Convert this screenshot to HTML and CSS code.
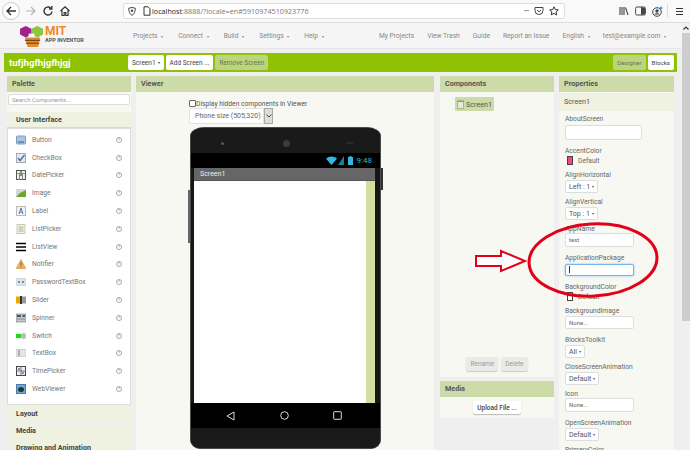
FILE: index.html
```html
<!DOCTYPE html>
<html lang="en">
<head>
    <meta charset="UTF-8">
    <title>MIT App Inventor</title>
    <link rel="stylesheet" href="styles.css">
</head>
<body>

    <div class="browser-bar">
        <span class="back-btn">
            <svg width="12" height="12" viewBox="0 0 12 12"><path d="M11 6H2M6 2L2 6l4 4" fill="none" stroke="#333" stroke-width="1.4"/></svg>
        </span>
        <svg class="tool-icon" width="12" height="12" viewBox="0 0 12 12"><path d="M1 6h9M6 2l4 4-4 4" fill="none" stroke="#b5b5b5" stroke-width="1.2"/></svg>
        <svg class="tool-icon" width="12" height="12" viewBox="0 0 12 12"><path d="M10 6.5A4 4 0 1 1 8.6 3M9.8 1v3H7" fill="none" stroke="#333" stroke-width="1.4"/></svg>
        <svg class="tool-icon" width="12" height="12" viewBox="0 0 12 12"><path d="M1.5 6L6 1.8 10.5 6M3 5.5V10.5h2.2V7.5h1.6v3H9V5.5" fill="none" stroke="#333" stroke-width="1.2"/></svg>
        <div class="url-bar">
            <svg width="8" height="9" viewBox="0 0 8 9"><path d="M.7 1.2L4 .5l3.300.7c0 3.500-1 5.800-3.300 7.200C1.700 7 .7 4.700.7 1.200z" fill="none" stroke="#444" stroke-width="1"/><circle cx="4" cy="3.8" r="1.2" fill="#444"/></svg>
            <svg width="8" height="10" viewBox="0 0 8 10"><path d="M1 .8h4l2 2v6.400H1z" fill="none" stroke="#333" stroke-width="1"/></svg>
            <span class="url-text"><b>localhost</b>:8888/?locale=en#5910974510923776</span>
            <span class="url-end">
                <span class="url-dots">&bull;&bull;&bull;</span>
                <svg width="10" height="10" viewBox="0 0 10 10"><path d="M1 1.5h8v3a4 4 0 0 1-8 0zM3 4l2 1.800L7 4" fill="none" stroke="#444" stroke-width="1"/></svg>
                <svg width="10" height="10" viewBox="0 0 10 10"><path d="M5 .8l1.300 2.700 3 .4-2.200 2 .6 3L5 7.400 2.300 8.900l.6-3-2.200-2 3-.4z" fill="none" stroke="#333" stroke-width="1"/></svg>
            </span>
        </div>
        <div class="browser-right">
            <svg width="10" height="10" viewBox="0 0 10 10"><path d="M1 1v8M3 1v8M5 1v8M6.5 1.5L9 9" fill="none" stroke="#444" stroke-width="1.1"/></svg>
            <svg width="11" height="10" viewBox="0 0 11 10"><rect x=".6" y="1" width="9.8" height="8" rx="1.5" fill="none" stroke="#444"/><path d="M6.500 1v8" stroke="#444"/><rect x="7" y="1.5" width="3" height="7" fill="#444"/></svg>
            <svg width="11" height="11" viewBox="0 0 11 11"><circle cx="5" cy="6" r="4.3" fill="none" stroke="#444"/><circle cx="5" cy="5" r="1.7" fill="#444"/><path d="M2.200 8.500C3 6.800 7 6.800 7.800 8.500" fill="#444"/><circle cx="9" cy="2" r="1.5" fill="#3aa6ef"/></svg>
            <span class="browser-sep"></span>
            <svg width="9" height="9" viewBox="0 0 9 9"><path d="M1 1.5h7M1 4.5h7M1 7.5h7" stroke="#333" stroke-width="1.2"/></svg>
        </div>
    </div>

    <div class="page">
        <div class="app">
            <div class="menu-bar">
                <div class="logo">
                    <svg width="25" height="24" viewBox="0 0 26 25">
                        <path d="M6 2l6 3v6l-6 3-6-3V5z" fill="#a3218e"/>
                        <path d="M18 2l6 3v6l-6 3-6-3V5z" fill="#8dc63f"/>
                        <rect x="9" y="10" width="6" height="4" fill="#fff"/>
                        <path d="M5 14h16l-2 10H8z" fill="#e58a2b"/>
                        <path d="M5 17h16M6 20h14" stroke="#5d3a17" stroke-width="1"/>
                    </svg>
                    <div class="logo-text">
                        <span class="logo-mit">MIT</span>
                        <span class="logo-sub">APP INVENTOR</span>
                    </div>
                </div>
                <div class="menu-left">
                    <span>Projects <i>&#9662;</i></span>
                    <span>Connect <i>&#9662;</i></span>
                    <span>Build <i>&#9662;</i></span>
                    <span>Settings <i>&#9662;</i></span>
                    <span>Help <i>&#9662;</i></span>
                </div>
                <div class="menu-right">
                    <span>My Projects</span>
                    <span>View Trash</span>
                    <span>Guide</span>
                    <span>Report an Issue</span>
                    <span>English <i>&#9662;</i></span>
                    <span>test@example.com <i>&#9662;</i></span>
                </div>
            </div>

            <div class="project-bar">
                <span class="project-name">tufjhgfhjgfhjgj</span>
                <div class="project-btns">
                    <span class="btn">Screen1 <i>&#9662;</i></span>
                    <span class="btn">Add Screen ...</span>
                    <span class="btn off">Remove Screen</span>
                </div>
                <div class="view-btns">
                    <span class="btn off">Designer</span>
                    <span class="btn">Blocks</span>
                </div>
            </div>

            <div class="columns">
                <div class="palette">
                    <div class="panel-head">Palette</div>
                    <div class="search-wrap"><div class="search-box">Search Components...</div></div>
                    <div class="drawer-head first">User Interface</div>
                    <div class="palette-list">
                        <div class="palette-row">
                            <svg width="10" height="10" viewBox="0 0 10 10"><rect x=".5" y="1" width="9" height="8" rx="1" fill="#a9c6e4" stroke="#7c9cbd"/><rect x="2" y="6" width="6" height="2" fill="#6d8fb4"/></svg>
                            <span>Button</span><em>?</em>
                        </div>
                        <div class="palette-row">
                            <svg width="10" height="10" viewBox="0 0 10 10"><rect x=".5" y=".5" width="9" height="9" fill="#e8e8e8" stroke="#aaa"/><path d="M2 5l2 2.500L8.500 2" fill="none" stroke="#3d78bd" stroke-width="1.5"/></svg>
                            <span>CheckBox</span><em>?</em>
                        </div>
                        <div class="palette-row">
                            <svg width="10" height="10" viewBox="0 0 10 10"><rect x=".5" y=".5" width="9" height="9" fill="#eee" stroke="#555"/><path d="M.5 3.500h9M3.500 3.500v6M6.500 3.500v6" stroke="#888"/><rect x="4" y="1" width="2" height="5" fill="#7d9a5a"/></svg>
                            <span>DatePicker</span><em>?</em>
                        </div>
                        <div class="palette-row">
                            <svg width="10" height="10" viewBox="0 0 10 10"><rect y="1" width="10" height="8" fill="#cfd8dc"/><path d="M0 9l4-4 6-3v7z" fill="#6ea52a"/></svg>
                            <span>Image</span><em>?</em>
                        </div>
                        <div class="palette-row">
                            <svg width="10" height="10" viewBox="0 0 10 10"><rect x=".5" y=".5" width="9" height="9" fill="#f2f2f2" stroke="#bbb"/><path d="M3 8l2-6 2 6M3.800 6h2.400" fill="none" stroke="#4a7ab5" stroke-width="1"/></svg>
                            <span>Label</span><em>?</em>
                        </div>
                        <div class="palette-row">
                            <svg width="10" height="10" viewBox="0 0 10 10"><rect x="1" y=".5" width="8" height="9" fill="#f2f4ea" stroke="#c5c9bb"/><path d="M2.500 3h5M2.500 5h5M2.500 7h5" stroke="#a4b96f"/></svg>
                            <span>ListPicker</span><em>?</em>
                        </div>
                        <div class="palette-row">
                            <svg width="10" height="10" viewBox="0 0 10 10"><path d="M0 1.500h10M0 5h10M0 8.500h10" stroke="#000" stroke-width="1.6"/></svg>
                            <span>ListView</span><em>?</em>
                        </div>
                        <div class="palette-row">
                            <svg width="10" height="10" viewBox="0 0 10 10"><path d="M5 .5L9.800 9.500H.2z" fill="#f0b45a" stroke="#d9822b" stroke-width=".6"/><path d="M5 3.500v3M5 7.500v1" stroke="#555"/></svg>
                            <span>Notifier</span><em>?</em>
                        </div>
                        <div class="palette-row">
                            <svg width="10" height="10" viewBox="0 0 10 10"><rect y="1.5" width="10" height="7" fill="#dde3ea" stroke="#bbb" stroke-width=".5"/><circle cx="3" cy="5" r="1" fill="#4a7ab5"/><circle cx="7" cy="5" r="1" fill="#4a7ab5"/></svg>
                            <span>PasswordTextBox</span><em>?</em>
                        </div>
                        <div class="palette-row">
                            <svg width="10" height="10" viewBox="0 0 10 10"><rect y="1.5" width="4" height="7" fill="#f0a800"/><rect x="4" y="1" width="2" height="8" fill="#333"/><rect x="6" y="1.5" width="4" height="7" fill="#999"/></svg>
                            <span>Slider</span><em>?</em>
                        </div>
                        <div class="palette-row">
                            <svg width="10" height="10" viewBox="0 0 10 10"><rect y="1" width="10" height="8" fill="#c3c8cc" stroke="#777" stroke-width=".6"/><rect x="1" y="2" width="4" height="2" fill="#3c5a76"/><rect x="6.5" y="2" width="2.5" height="2" fill="#3c5a76"/><path d="M1 6h8" stroke="#888"/></svg>
                            <span>Spinner</span><em>?</em>
                        </div>
                        <div class="palette-row">
                            <svg width="10" height="10" viewBox="0 0 10 10"><rect y="3" width="6" height="4" fill="#18e018"/><rect x="5" y="2" width="5" height="6" rx="2.5" fill="#bbb"/></svg>
                            <span>Switch</span><em>?</em>
                        </div>
                        <div class="palette-row">
                            <svg width="10" height="10" viewBox="0 0 10 10"><rect y="1.5" width="10" height="7" fill="#e2e5ea" stroke="#bbb" stroke-width=".6"/><path d="M3 2v6" stroke="#777"/></svg>
                            <span>TextBox</span><em>?</em>
                        </div>
                        <div class="palette-row">
                            <svg width="10" height="10" viewBox="0 0 10 10"><rect x=".5" y=".5" width="9" height="9" fill="#eee" stroke="#444"/><path d="M.5 5h9M5 .5v9" stroke="#777"/><circle cx="3" cy="3" r="1" fill="#4a7ab5"/><circle cx="7" cy="7" r="1" fill="#4a7ab5"/></svg>
                            <span>TimePicker</span><em>?</em>
                        </div>
                        <div class="palette-row">
                            <svg width="10" height="10" viewBox="0 0 10 10"><rect x=".5" y=".5" width="9" height="9" fill="#6fa8dc" stroke="#4a7ab5"/><ellipse cx="5" cy="5.5" rx="3" ry="2.5" fill="#27391b"/></svg>
                            <span>WebViewer</span><em>?</em>
                        </div>
                    </div>
                    <div class="drawer-head">Layout</div>
                    <div class="drawer-head">Media</div>
                    <div class="drawer-head">Drawing and Animation</div>
                </div>

                <div class="viewer">
                    <div class="panel-head">Viewer</div>
                    <div class="viewer-body">
                        <div class="hidden-toggle"><span class="check"></span>Display hidden components in Viewer</div>
                        <div class="size-select">
                            <span class="size-value">Phone size (505,320)</span>
                            <span class="size-arrow">
                                <svg width="6" height="4" viewBox="0 0 6 4"><path d="M.5.5L3 3 5.500.5" fill="none" stroke="#444" stroke-width="1"/></svg>
                            </span>
                        </div>
                        <div class="phone-frame">
                            <div class="phone">
                                <div class="phone-top">
                                    <span class="cam small"></span>
                                    <span class="cam"></span>
                                    <span class="sensors"></span>
                                </div>
                                <div class="status-bar">
                                    <svg width="11" height="9" viewBox="0 0 11 9"><path d="M5.500 9L0 2.800C3-.4 8-.4 11 2.800z" fill="#33b5e5"/></svg>
                                    <svg class="signal" width="6" height="9" viewBox="0 0 6 9"><path d="M0 9h6V0z" fill="#1f7d9e"/></svg>
                                    <svg class="battery" width="5" height="9" viewBox="0 0 5 9"><path d="M1.500 0h2v1H5v8H0V1h1.500z" fill="#33b5e5"/></svg>
                                    <span class="clock">9:48</span>
                                </div>
                                <div class="form-title">Screen1</div>
                                <div class="form-body"><div class="form-strip"></div></div>
                                <div class="nav-bar">
                                    <svg width="9" height="10" viewBox="0 0 9 10"><path d="M8 1v8L1 5z" fill="none" stroke="#ddd" stroke-width="1"/></svg>
                                    <svg width="9" height="9" viewBox="0 0 9 9"><circle cx="4.5" cy="4.5" r="3.8" fill="none" stroke="#ddd" stroke-width="1"/></svg>
                                    <svg width="9" height="9" viewBox="0 0 9 9"><rect x=".7" y=".7" width="7.6" height="7.6" rx=".6" fill="none" stroke="#ddd" stroke-width="1"/></svg>
                                </div>
                                <div class="phone-chin"></div>
                            </div>
                        </div>
                    </div>
                </div>

                <div class="middle">
                    <div class="components">
                        <div class="panel-head">Components</div>
                        <div class="tree">
                            <div class="tree-item">
                                <svg width="7" height="9" viewBox="0 0 7 9"><rect x=".5" y=".5" width="6" height="8" fill="#e6e8dc" stroke="#a9b78a"/><path d="M.5 1.500h6" stroke="#8c9a6c"/></svg>
                                Screen1
                            </div>
                        </div>
                        <div class="comp-btns">
                            <span class="btn off grey">Rename</span>
                            <span class="btn off grey">Delete</span>
                        </div>
                    </div>
                    <div class="media">
                        <div class="panel-head">Media</div>
                        <div class="media-body"><span class="btn">Upload File ...</span></div>
                    </div>
                </div>

                <div class="properties">
                    <div class="panel-head">Properties</div>
                    <div class="prop-head">Screen1</div>
                    <div class="prop-list">
                        <div class="prop"><label>AboutScreen</label><div class="prop-area"></div></div>
                        <div class="prop"><label>AccentColor</label><div class="prop-color"><span class="swatch pink"></span>Default</div></div>
                        <div class="prop"><label>AlignHorizontal</label><span class="prop-select">Left : 1 <i>&#9662;</i></span></div>
                        <div class="prop"><label>AlignVertical</label><span class="prop-select">Top : 1 <i>&#9662;</i></span></div>
                        <div class="prop"><label>AppName</label><div class="prop-input up">test</div></div>
                        <div class="prop"><label>ApplicationPackage</label><div class="prop-input focus"><span class="caret"></span></div></div>
                        <div class="prop"><label>BackgroundColor</label><div class="prop-color"><span class="swatch"></span>Default</div></div>
                        <div class="prop"><label>BackgroundImage</label><div class="prop-input">None...</div></div>
                        <div class="prop"><label>BlocksToolkit</label><span class="prop-select">All <i>&#9662;</i></span></div>
                        <div class="prop"><label>CloseScreenAnimation</label><span class="prop-select">Default <i>&#9662;</i></span></div>
                        <div class="prop"><label>Icon</label><div class="prop-input up">None...</div></div>
                        <div class="prop"><label>OpenScreenAnimation</label><span class="prop-select">Default <i>&#9662;</i></span></div>
                        <div class="prop"><label>PrimaryColor</label></div>
                    </div>
                </div>
            </div>
        </div>

        <div class="scrollbar">
            <svg width="8" height="7" viewBox="0 0 8 7"><path d="M1.5 4.5L4 2l2.500 2.500" fill="none" stroke="#333" stroke-width="1.1"/></svg>
            <div class="scroll-thumb"></div>
        </div>
    </div>

    <!-- the hand drawn marks on top of the screenshot -->
    <svg class="annotation" width="690" height="450" viewBox="0 0 690 450">
        <path d="M476 256h25v-5l24 10-24 10v-5h-25z" fill="#fff" stroke="#e2001a" stroke-width="2"/>
        <ellipse cx="593" cy="260" rx="64" ry="36" transform="rotate(-3 593 260)" fill="none" stroke="#e2001a" stroke-width="3"/>
    </svg>

</body>
</html>
```

FILE: styles.css
```css
*{
    box-sizing: border-box;
}
html, body{
    margin: 0;
    height: 450px;
    overflow: hidden;
}
body{
    position: relative;
    width: 690px;
    background: #efefef;
    font-family: "Roboto", "Liberation Sans", sans-serif;
    font-size: 6.7px;
    color: #666;
}
i{
    font-style: normal;
    font-size: 4px;
    margin-left: 2px;
}

/* browser chrome */
.browser-bar{
    display: flex;
    align-items: center;
    gap: 5px;
    height: 23px;
    padding-left: 2px;
    background: #f9f9fa;
    border-bottom: 1px solid #ddd;
}
.back-btn{
    display: flex;
    align-items: center;
    justify-content: center;
    width: 18px;
    height: 18px;
    border: 1px solid #ccc;
    border-radius: 50%;
    background: #fff;
}
.url-bar{
    display: flex;
    align-items: center;
    gap: 7px;
    width: 442px;
    height: 16px;
    margin-left: 47px;
    padding: 0 5px 0 4px;
    background: #fff;
    border: 1px solid #ddd;
    border-radius: 2px;
}
.url-text{
    margin-left: -6px;
    font-family: "Open Sans", sans-serif;
    font-size: 7.2px;
    color: #777;
    white-space: nowrap;
}
.url-text b{
    font-weight: 400;
    color: #222;
}
.url-end{
    display: flex;
    align-items: center;
    gap: 5px;
    margin-left: auto;
}
.url-dots{
    font-size: 5px;
    color: #333;
}
.browser-right{
    display: flex;
    align-items: center;
    gap: 6px;
    margin-left: 49px;
}
.browser-sep{
    width: 1px;
    height: 14px;
    margin: 0 1px 0 -2px;
    background: #ddd;
}

.page{
    display: flex;
    height: 427px;
}
.app{
    width: 682px;
    flex: none;
}
.scrollbar{
    flex: none;
    width: 8px;
    padding-top: 2px;
    background: #f0f0f0;
}
.scrollbar svg{
    display: block;
}
.scroll-thumb{
    width: 8px;
    height: 288px;
    margin-top: 1px;
    background: #cdcdcd;
}

/* app menu */
.menu-bar{
    display: flex;
    align-items: center;
    height: 26px;
    padding-left: 20px;
    background: #f5f5f5;
    border-bottom: 1px solid #e6e6e6;
    font-size: 6.7px;
    color: #888;
}
.logo{
    display: flex;
    align-items: center;
    width: 113px;
    flex: none;
}
.logo-text{
    display: flex;
    flex-direction: column;
    padding-bottom: 2px;
}
.logo-mit{
    font-size: 12px;
    line-height: 12px;
    font-weight: 700;
    color: #f08a24;
}
.logo-sub{
    font-size: 5.5px;
    line-height: 7px;
    font-weight: 700;
    color: #555;
}
.menu-left{
    display: flex;
    gap: 15px;
}
.menu-right{
    display: flex;
    gap: 13px;
    margin-left: auto;
    padding-right: 16px;
}

/* project toolbar */
.project-bar{
    display: flex;
    align-items: center;
    width: 673px;
    height: 19px;
    margin: 4px 0 4px 4px;
    padding: 0 3px 0 5px;
    background: #8fc202;
}
.project-name{
    width: 119px;
    font-size: 9.6px;
    font-weight: 700;
    color: #fff;
}
.project-btns, .view-btns{
    display: flex;
    gap: 2px;
}
.view-btns{
    margin-left: auto;
}
.view-btns .btn{
    font-size: 6.2px;
}
.btn{
    display: inline-flex;
    align-items: center;
    height: 15px;
    padding: 0 4px;
    background: #fff;
    border-radius: 2px;
    color: #444;
    font-size: 6.5px;
    white-space: nowrap;
}
.btn.off{
    background: #bcd47f;
    color: #6b7a45;
}
.btn.grey{
    height: 14px;
    background: #ebebe6;
    color: #999;
    box-shadow: 0 1px 1px #ccc;
}

/* panels */
.columns{
    display: flex;
    align-items: flex-start;
    padding-left: 7px;
}
.panel-head{
    height: 16px;
    line-height: 16px;
    padding-left: 5px;
    background: #cddba9;
    color: #555;
    font-weight: 700;
    font-size: 7.2px;
}
.palette{
    flex: none;
    width: 124px;
    height: 374px;
    overflow: hidden;
}
.search-wrap{
    height: 20px;
    padding-top: 2px;
    background: #f7f8f1;
}
.search-box{
    height: 11px;
    line-height: 10px;
    margin: 0 1px;
    padding-left: 3px;
    background: #fff;
    border: 1px solid #ddd;
    border-radius: 2px;
    font-size: 6px;
    color: #999;
}
.drawer-head{
    height: 16px;
    line-height: 15px;
    margin-bottom: 1px;
    padding-left: 9px;
    background: #eff2e0;
    color: #444;
    font-weight: 700;
    font-size: 7.2px;
}
.drawer-head.first{
    margin-bottom: 0;
    border-bottom: 1px solid #d8dcc6;
}
.palette-list{
    height: 277px;
    margin-bottom: 1px;
    padding-top: 2px;
    background: #fff;
    border: 1px solid #ddd;
}
.palette-row{
    display: flex;
    align-items: center;
    height: 17.8px;
    padding-left: 8px;
    color: #777;
}
.palette-row span{
    margin-left: 6px;
}
.palette-row em{
    width: 6px;
    height: 6px;
    margin-left: auto;
    margin-right: 8px;
    border: 1px solid #aaa;
    border-radius: 50%;
    font-style: normal;
    font-size: 4px;
    line-height: 4px;
    text-align: center;
    color: #888;
}

.viewer{
    flex: none;
    width: 298px;
    height: 374px;
    margin-left: 5px;
    overflow: hidden;
}
.viewer-body{
    height: 358px;
    padding: 7px 0 0 53px;
    background: #f7f8f1;
}
.hidden-toggle{
    display: flex;
    align-items: center;
    height: 9px;
    color: #555;
}
.check{
    width: 7px;
    height: 7px;
    border: 1px solid #666;
    border-radius: 1px;
    background: #fff;
}
.size-select{
    display: flex;
    width: 84px;
    height: 16px;
}
.size-value{
    flex: 1;
    line-height: 15px;
    padding-left: 5px;
    background: #fff;
    border: 1px solid #e2e2e2;
    border-radius: 2px 0 0 2px;
    white-space: nowrap;
    font-size: 7px;
    color: #666;
}
.size-arrow{
    display: flex;
    align-items: center;
    justify-content: center;
    flex: none;
    width: 9px;
    background: #ddd;
    border: 1px solid #aaa;
}

.phone-frame{
    position: relative;
    width: 191px;
    margin: 3px 0 0 1px;
}
/* side buttons */
.phone-frame::before, .phone-frame::after{
    content: "";
    position: absolute;
    width: 2px;
}
.phone-frame::before{
    top: 41px;
    right: -2px;
    height: 22px;
    background: #333;
}
.phone-frame::after{
    top: 63px;
    left: -2px;
    height: 53px;
    background: #666;
}
.phone{
    height: 322px;
    background: #161616;
    border: 1px solid #4a4a4a;
    border-radius: 14px 14px 10px 10px / 9px 9px 9px 9px;
    overflow: hidden;
}
.phone-top{
    display: flex;
    align-items: center;
    height: 25px;
    padding: 5px 0 0 30px;
    background: #1a1a1a;
}
.cam{
    width: 7px;
    height: 7px;
    margin-left: 59px;
    border-radius: 50%;
    background: #3b3b3b;
}
.cam.small{
    width: 3px;
    height: 3px;
    margin-left: 0;
    background: #555;
}
.sensors{
    width: 6px;
    height: 2px;
    margin-left: 57px;
    background: #2a2a2a;
}
.status-bar{
    display: flex;
    align-items: center;
    justify-content: flex-end;
    height: 15px;
    padding-right: 8px;
    background: #000;
}
.signal{
    margin-left: 1px;
}
.battery{
    margin-left: 4px;
}
.clock{
    margin-left: 4px;
    font-size: 8px;
    color: #33b5e5;
}
.form-title{
    height: 13px;
    line-height: 12px;
    margin: 0 5px 0 3px;
    padding-left: 6px;
    background: #666;
    border-bottom: 1px solid #555;
    color: #eee;
    font-size: 7px;
}
.form-body{
    display: flex;
    justify-content: flex-end;
    height: 222px;
    margin: 0 5px 0 3px;
    background: #fff;
}
.form-strip{
    width: 9px;
    background: #d2df9f;
}
.nav-bar{
    display: flex;
    align-items: center;
    justify-content: space-between;
    height: 25px;
    padding: 0 38px 0 35px;
    background: #000;
}
.phone-chin{
    height: 21px;
    background: #1a1a1a;
}

.middle{
    flex: none;
    width: 114px;
    margin-left: 6px;
}
.components{
    display: flex;
    flex-direction: column;
    height: 301px;
    background: #f7f8f1;
}
.tree{
    flex: 1;
    padding: 5px 0 0 15px;
}
.tree-item{
    display: inline-flex;
    align-items: center;
    gap: 2px;
    height: 14px;
    padding: 0 2px;
    background: #cddba9;
    color: #555;
    font-size: 7.2px;
}
.comp-btns{
    display: flex;
    justify-content: center;
    gap: 3px;
    padding-bottom: 6px;
}
.media{
    height: 37px;
    margin-top: 4px;
    background: #f7f8f1;
}
.media-body{
    display: flex;
    justify-content: center;
    padding-top: 4px;
}
.media-body .btn{
    height: 13px;
    font-weight: 500;
    box-shadow: 0 1px 1px #bbb;
}

.properties{
    flex: none;
    width: 115px;
    height: 374px;
    margin-left: 5px;
    background: #f7f8f1;
    overflow: hidden;
}
.prop-head{
    height: 18px;
    line-height: 17px;
    margin-top: 1px;
    padding-left: 5px;
    background: #eff2e0;
    color: #555;
    font-size: 7.2px;
}
.prop-list{
    padding: 3px 0 0 6px;
}
.prop{
    padding-bottom: 4px;
}
.prop label{
    display: block;
    height: 10px;
    line-height: 10px;
    color: #666;
}
.prop-area{
    width: 77px;
    height: 15px;
    margin-top: 1px;
    margin-bottom: 2px;
    background: #fff;
    border: 1px solid #ddd;
    border-radius: 2px;
}
.prop-color{
    display: flex;
    align-items: center;
    height: 9px;
    margin-bottom: 1px;
    padding-left: 2px;
    color: #666;
}
.swatch{
    width: 6px;
    height: 9px;
    margin-right: 5px;
    border: 1px solid #444;
    background: #fff;
}
.swatch.pink{
    background: #ff4081;
}
.prop-select{
    display: flex;
    align-items: center;
    width: fit-content;
    height: 13px;
    padding: 0 3px;
    background: #fff;
    border: 1px solid #ddd;
    border-radius: 2px;
    font-size: 7px;
    color: #555;
}
.prop-input{
    width: 69px;
    height: 13px;
    line-height: 11px;
    margin-bottom: 2px;
    padding-left: 3px;
    background: #fff;
    border: 1px solid #ddd;
    border-radius: 2px;
    font-size: 6px;
    color: #666;
}
.prop-input.up{
    height: 14px;
    margin-top: -1px;
    line-height: 12px;
}
.prop-input.focus{
    height: 12px;
    margin-top: 1px;
    border-color: #74b4ea;
    box-shadow: 0 0 2px #74b4ea;
}
.caret{
    display: block;
    width: 1px;
    height: 7px;
    margin-top: 1px;
    background: #333;
}

/* hand drawn marks */
.annotation{
    position: absolute;
    top: 0;
    left: 0;
}
```
